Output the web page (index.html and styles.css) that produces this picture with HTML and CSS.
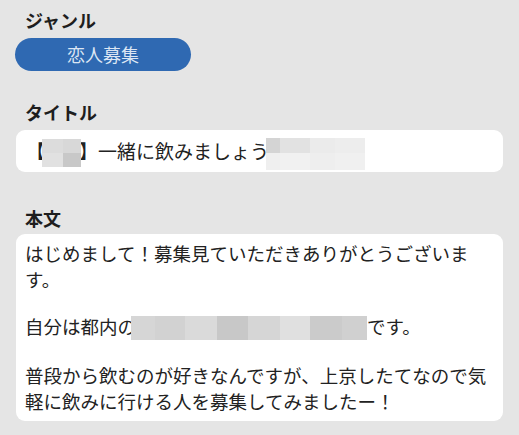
FILE: index.html
```html
<!DOCTYPE html>
<html lang="ja">
<head>
<meta charset="utf-8">
<link rel="stylesheet" href="styles.css">
</head>
<body>
<div class="page">
  <div class="label label-genre">ジャンル</div>
  <div class="pill">恋人募集</div>

  <div class="label label-title">タイトル</div>
  <div class="card title-card">【<span class="blur b1"><i class="c11"></i><i class="c12"></i><i class="c21"></i><i class="c22"></i></span>】一緒に飲みましょう<span class="blur b2"><i class="d11"></i><i class="d12"></i><i class="d13"></i><i class="d14"></i><i class="d21"></i><i class="d22"></i><i class="d23"></i><i class="d24"></i></span></div>

  <div class="label label-body">本文</div>
  <div class="card body-card">
    <p>はじめまして！募集見ていただきありがとうございます。</p>
    <p>自分は都内の<span class="blur b3"><i class="e1"></i><i class="e2"></i><i class="e3"></i><i class="e4"></i><i class="e5"></i><i class="e6"></i><i class="e7"></i><i class="e8"></i></span>です。</p>
    <p>普段から飲むのが好きなんですが、上京したてなので気軽に飲みに行ける人を募集してみましたー！</p>
  </div>
</div>
</body>
</html>
```

FILE: styles.css
```css
html, body {
  margin: 0;
  padding: 0;
  background: #e5e5e5;
}
body {
  width: 519px;
  height: 435px;
  overflow: hidden;
  font-family: "Noto Sans CJK JP", "Noto Sans", sans-serif;
  color: #222222;
}
.page {
  padding: 8px 16px 0 16px;
}
.label {
  font-size: 18px;
  font-weight: 700;
  line-height: 24px;
  height: 24px;
  padding-left: 9px;
  color: #1e1e1e;
}
.label-title { margin-top: 29px; }
.label-body { margin-top: 34px; }
.pill {
  margin-top: 6px;
  margin-left: -1px;
  width: 176px;
  height: 33px;
  border-radius: 17px;
  background: #2f69b2;
  color: #dce6f4;
  font-size: 18px;
  line-height: 33px;
  text-align: center;
}
.card {
  background: #ffffff;
  border-radius: 9px;
}
.title-card {
  margin-top: 6px;
  height: 42px;
  padding-left: 10px;
  font-size: 19px;
  line-height: 42px;
  white-space: nowrap;
}
.body-card {
  margin-top: 4px;
  padding: 6px 10px 7px 9px;
  font-size: 18.5px;
  line-height: 26px;
}
.body-card p {
  margin: 0;
}
.body-card p + p {
  margin-top: 21px;
}
.blur {
  display: inline-grid;
  vertical-align: middle;
}
.blur i { display: block; }
.b1 {
  width: 39px;
  height: 28px;
  margin: 0 -2px 0 -3px;
  grid-template-columns: 21px 18px;
  grid-template-rows: 14px 14px;
  position: relative;
  top: -1px;
}
.c11 { background: #dcdcdc; }
.c12 { background: #d8d8d8; }
.c21 { background: #e1e1e1; }
.c22 { background: #c8c8c8; }
.b2 {
  width: 99px;
  height: 32px;
  margin-left: -3px;
  grid-template-columns: 14px 30px 25px 30px;
  grid-template-rows: 15px 17px;
}
.d11 { background: #d4d4d4; }
.d12 { background: #e2e2e2; }
.d13 { background: #ebebeb; }
.d14 { background: #ededed; }
.d21 { background: #efefef; }
.d22 { background: #f1f1f1; }
.d23 { background: #eeeeee; }
.d24 { background: #f0f0f0; }
.b3 {
  width: 236px;
  height: 24px;
  margin-left: -5px;
  grid-template-columns: 24px 30px 32px 31px 32px 30px 32px 25px;
  grid-template-rows: 24px;
  position: relative;
  top: -1px;
}
.e1 { background: #d6d6d6; }
.e2 { background: #d2d2d2; }
.e3 { background: #dadada; }
.e4 { background: #c8c8c8; }
.e5 { background: #d6d6d6; }
.e6 { background: #e0e0e0; }
.e7 { background: #cbcbcb; }
.e8 { background: #d0d0d0; }
```
